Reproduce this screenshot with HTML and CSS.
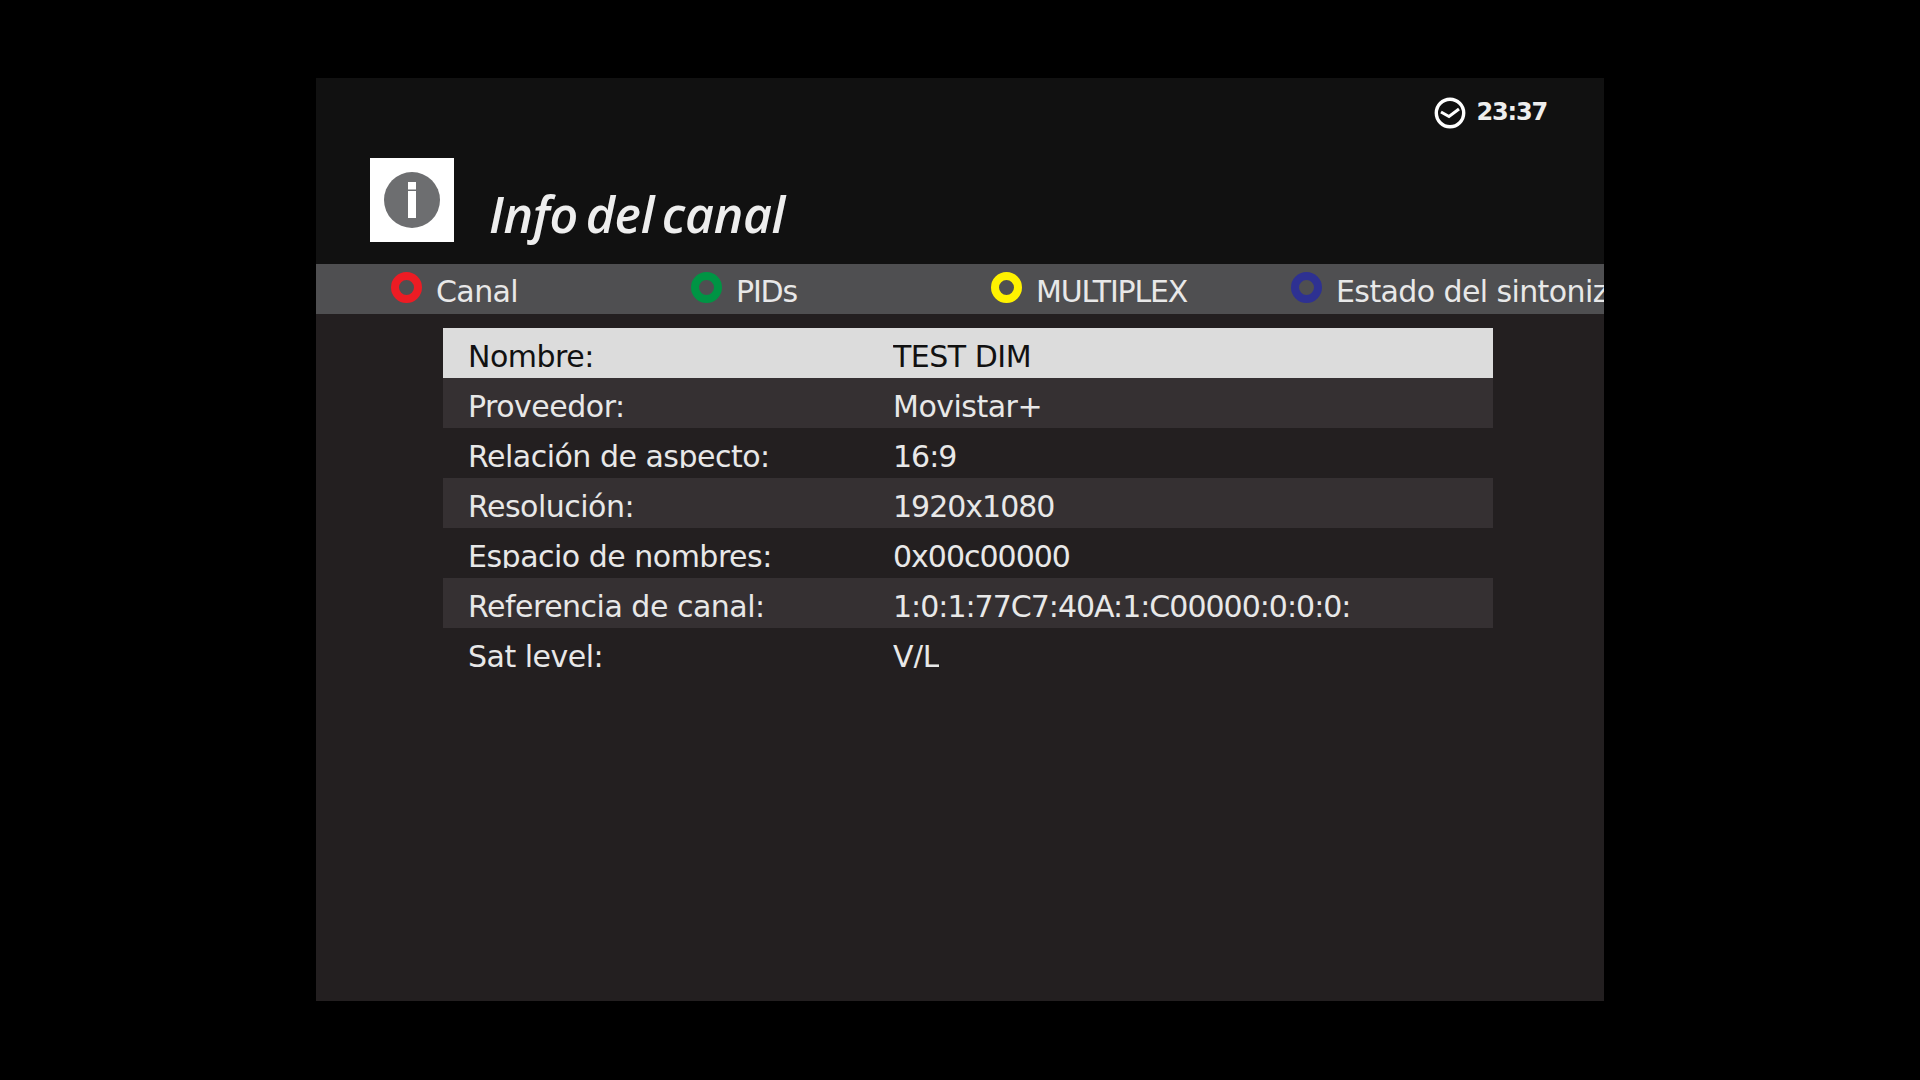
FILE: index.html
```html
<!DOCTYPE html>
<html lang="es">
<head>
  <meta charset="UTF-8">
  <title>Info del canal</title>
  <link rel="stylesheet" href="styles.css">
</head>
<body>
  <div class="screen">
    <div class="header">
      <div class="clock">
        <svg class="clock-icon" width="32" height="32" viewBox="0 0 32 32">
          <circle cx="16" cy="16" r="13.7" fill="none" stroke="#fff" stroke-width="3.4"/>
          <path d="M7 15 L15 19.5 L25 12" fill="none" stroke="#fff" stroke-width="3"/>
        </svg>
        <span class="time">23:37</span>
      </div>
      <div class="title-row">
        <div class="info-icon">
          <svg width="56" height="56" viewBox="0 0 56 56">
            <circle cx="28" cy="28" r="28" fill="#6d6e70"/>
            <rect x="24" y="10" width="8" height="7.5" fill="#fff"/>
            <rect x="24" y="19" width="8" height="27" fill="#fff"/>
          </svg>
        </div>
        <h1 class="title">Info del canal</h1>
      </div>
    </div>

    <div class="button-bar">
      <div class="key"><span class="dot dot-red"></span><span class="key-label loose">Canal</span></div>
      <div class="key"><span class="dot dot-green"></span><span class="key-label">PIDs</span></div>
      <div class="key"><span class="dot dot-yellow"></span><span class="key-label">MULTIPLEX</span></div>
      <div class="key"><span class="dot dot-blue"></span><span class="key-label loose">Estado del sintonizador</span></div>
    </div>

    <div class="content">
      <div class="list">
        <div class="row selected"><div class="name">Nombre:</div><div class="value">TEST DIM</div></div>
        <div class="row odd"><div class="name">Proveedor:</div><div class="value">Movistar+</div></div>
        <div class="row"><div class="name">Relación de aspecto:</div><div class="value num">16:9</div></div>
        <div class="row odd"><div class="name">Resolución:</div><div class="value num">1920x1080</div></div>
        <div class="row"><div class="name">Espacio de nombres:</div><div class="value num">0x00c00000</div></div>
        <div class="row odd"><div class="name">Referencia de canal:</div><div class="value num">1:0:1:77C7:40A:1:C00000:0:0:0:</div></div>
        <div class="row"><div class="name">Sat level:</div><div class="value">V/L</div></div>
      </div>
    </div>
  </div>
</body>
</html>
```

FILE: styles.css
```css
body {
  margin: 0;
  background-color: #000;
  font-family: "DejaVu Sans", sans-serif;
  color: #e8e8e8;
}

.screen {
  width: 1288px;
  height: 923px;
  margin: 78px 0 0 316px;
  display: flex;
  flex-direction: column;
  overflow: hidden;
  background-color: #231f20;
}

.header {
  height: 186px;
  background-color: #111;
  display: flex;
  flex-direction: column;
}

.clock {
  height: 80px;
  padding: 19px 57px 0 0;
  box-sizing: border-box;
  display: flex;
  justify-content: flex-end;
  gap: 11px;
}

.time {
  font-size: 24px;
  font-weight: bold;
  letter-spacing: -1.2px;
  line-height: 30px;
  color: #eee;
}

.title-row {
  display: flex;
  align-items: flex-start;
  padding-left: 54px;
}

.info-icon {
  width: 84px;
  height: 84px;
  background-color: #fff;
  display: flex;
  align-items: center;
  justify-content: center;
}

.title {
  margin: 24px 0 0 35px;
  font-family: "Open Sans", sans-serif;
  font-size: 50px;
  font-style: italic;
  font-weight: 600;
  letter-spacing: -0.3px;
  word-spacing: -5px;
  line-height: 64px;
  color: #eee;
}

.button-bar {
  height: 50px;
  flex: none;
  display: flex;
  background-color: #4f4f51;
  padding-left: 75px;
}

.key {
  flex: none;
  width: 300px;
  display: flex;
  white-space: nowrap;
}

.dot {
  flex: none;
  width: 31px;
  height: 31px;
  margin-top: 8px;
  box-sizing: border-box;
  border-radius: 50%;
  border: 8.5px solid;
}

.dot-red { border-color: #ed1c24; }
.dot-green { border-color: #009444; }
.dot-yellow { border-color: #fff200; }
.dot-blue { border-color: #2e3192; }

.key-label {
  margin-left: 14px;
  font-size: 30px;
  letter-spacing: -1.2px;
  line-height: 55px;
}

.key-label.loose {
  letter-spacing: -0.6px;
}

.content {
  padding: 14px 111px 0 127px;
}

.row {
  height: 50px;
  display: flex;
  font-size: 30px;
  letter-spacing: -0.5px;
}

.row.odd {
  background-color: #353032;
}

.row.selected {
  background-color: #dcdcdc;
  color: #111;
}

.name,
.value {
  height: 40px;
  box-sizing: border-box;
  padding-top: 10px;
  line-height: 37px;
  overflow: hidden;
  white-space: nowrap;
}

.name {
  width: 450px;
  padding-left: 25px;
}

.value.num {
  letter-spacing: -1px;
}
```
